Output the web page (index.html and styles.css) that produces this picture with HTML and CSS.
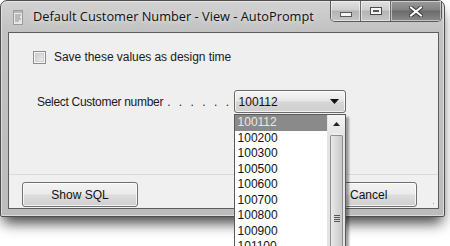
FILE: index.html
```html
<!DOCTYPE html>
<html>
<head>
<meta charset="utf-8">
<link rel="stylesheet" href="styles.css">
</head>
<body>
<div class="window">
  <div class="titlebar">
    <svg class="app-icon" width="10" height="15" viewBox="0 0 10 15">
      <rect x="0.5" y="0.5" width="9" height="14" fill="#e8e8e8" stroke="#9a9a9a"/>
      <rect x="1" y="1" width="8" height="2" fill="#b8b8b8"/>
      <path d="M2 5h6M2 7h5M2 9h6M2 11h4" stroke="#8c8c8c" stroke-width="1"/>
    </svg>
    <span class="title">Default Customer Number - View - AutoPrompt</span>
    <div class="caption-buttons">
      <div class="cap-btn cap-min"><span class="min-glyph"></span></div>
      <div class="cap-btn cap-max"><span class="max-glyph"></span></div>
      <div class="cap-btn cap-close">
        <svg width="14" height="11" viewBox="0 0 14 11">
          <path d="M2 1.5L12 9.5M12 1.5L2 9.5" stroke="#3a3a3a" stroke-width="4" stroke-linecap="square"/>
          <path d="M2 1.5L12 9.5M12 1.5L2 9.5" stroke="#ffffff" stroke-width="2" stroke-linecap="square"/>
        </svg>
      </div>
    </div>
  </div>
  <div class="client">
    <div class="content">
      <div class="check-row"><span class="checkbox"></span><span class="check-label">Save these values as design time</span></div>
      <div class="select-row">
        <span class="select-label">Select Customer number</span><span class="leader">......</span>
        <div class="combo">
          <span class="combo-value">100112</span>
          <svg class="combo-arrow" width="9" height="5" viewBox="0 0 9 5"><path d="M0 0H9L4.5 5Z" fill="#111"/></svg>
          <div class="dropdown">
            <ul class="items">
              <li class="item selected">100112</li>
              <li class="item">100200</li>
              <li class="item">100300</li>
              <li class="item">100500</li>
              <li class="item">100600</li>
              <li class="item">100700</li>
              <li class="item">100800</li>
              <li class="item">100900</li>
              <li class="item">101100</li>
            </ul>
            <div class="scrollbar">
              <div class="scroll-up"><svg width="7" height="4" viewBox="0 0 7 4"><path d="M0 4H7L3.5 0Z" fill="#222"/></svg></div>
              <div class="thumb"><span class="grip"></span></div>
            </div>
          </div>
        </div>
      </div>
    </div>
    <div class="footer">
      <button class="btn btn-sql">Show SQL</button>
      <button class="btn btn-cancel">Cancel</button>
    </div>
    <div class="grip-corner"></div>
  </div>
</div>
</body>
</html>
```

FILE: styles.css
```css
html, body {
  margin: 0;
  padding: 0;
  background: #ffffff;
  overflow: hidden;
  width: 450px;
  height: 246px;
}

.window {
  position: relative;
  width: 443px;
  height: 215px;
  border: 1px solid #4e4e4e;
  border-radius: 7px 7px 2px 2px;
  background: linear-gradient(180deg, #d2d2d2 0px, #c2c2c2 30px, #bcbcbc 100%);
  box-shadow: 0 9px 14px -3px rgba(0, 0, 0, 0.75), inset 0 0 0 1px rgba(255,255,255,0.45);
  display: flex;
  flex-direction: column;
  font-family: "Liberation Sans", Arial, sans-serif;
}

.titlebar {
  height: 31px;
  display: flex;
  align-items: flex-start;
  position: relative;
}

.app-icon {
  margin: 9px 0 0 12px;
}

.title {
  margin: 6px 0 0 10px;
  font-family: "Open Sans", "Liberation Sans", sans-serif;
  font-size: 12.8px;
  color: #111;
  text-shadow: 0 0 6px rgba(255,255,255,0.9);
}

.caption-buttons {
  margin-left: auto;
  margin-right: 2px;
  display: flex;
  height: 20px;
  border: 1px solid #5a5a5a;
  border-top: none;
  border-radius: 0 0 5px 5px;
  overflow: hidden;
}

.cap-btn {
  height: 20px;
  display: flex;
  align-items: center;
  justify-content: center;
  background: linear-gradient(180deg, #e0e0e0 0%, #cfcfcf 45%, #b4b4b4 50%, #c6c6c6 100%);
  box-shadow: inset 0 0 0 1px rgba(255,255,255,0.5);
}

.cap-min {
  width: 29px;
  border-right: 1px solid #6a6a6a;
}

.cap-max {
  width: 29px;
  border-right: 1px solid #6a6a6a;
}

.cap-close {
  width: 50px;
  background: linear-gradient(180deg, #9a9a9a 0%, #828282 45%, #6a6a6a 50%, #8a8a8a 100%);
}

.min-glyph {
  width: 10px;
  height: 3px;
  margin-top: 6px;
  background: #f4f4f4;
  border: 1px solid #5a5a5a;
}

.max-glyph {
  width: 10px;
  height: 6px;
  background: #e6e6e6;
  border: 1px solid #4a4a4a;
  box-shadow: inset 0 0 0 2px #f4f4f4, inset 0 0 0 3px #555;
}

.client {
  position: relative;
  margin: 0 5px 0 7px;
  height: 175px;
  border: 1px solid #5d5d5d;
  background: #efefef;
  display: flex;
  flex-direction: column;
  font-size: 12px;
  color: #1a1a1a;
}

.content {
  height: 142px;
  border-bottom: 1px solid #dadada;
  padding-top: 17px;
  box-sizing: border-box;
}

.check-row {
  display: flex;
  align-items: center;
  margin-left: 24px;
  height: 14px;
}

.checkbox {
  width: 11px;
  height: 11px;
  border: 1px solid #8c8c8c;
  background: linear-gradient(135deg, #c4c4c4, #f4f4f4);
  box-shadow: inset 0 0 0 1px #f6f6f6, inset 0 0 0 2px #cfcfcf;
  margin-right: 8px;
}

.check-label {
  font-size: 12px;
  letter-spacing: -0.05px;
}

.select-row {
  display: flex;
  align-items: center;
  margin-top: 26px;
  margin-left: 28px;
  height: 23px;
}

.select-label {
  font-size: 12px;
  letter-spacing: -0.3px;
}

.leader {
  letter-spacing: 8.4px;
  margin-left: 4px;
}

.combo {
  position: relative;
  margin-left: -4px;
  width: 110px;
  height: 21px;
  border: 1px solid #6a6a6a;
  border-radius: 3px;
  background: linear-gradient(180deg, #f6f6f6 0%, #e6e6e6 48%, #d6d6d6 52%, #cfcfcf 100%);
  box-shadow: inset 0 0 0 1px rgba(255,255,255,0.7);
  display: flex;
  align-items: center;
}

.combo-value {
  margin-left: 4px;
  font-size: 12px;
  color: #111;
}

.combo-arrow {
  margin-left: auto;
  margin-right: 6px;
}

.dropdown {
  position: absolute;
  left: -1px;
  top: 23px;
  width: 110px;
  height: 140px;
  border: 1px solid #5a5a5a;
  background: #ffffff;
  display: flex;
  box-shadow: 3px 3px 2px rgba(0, 0, 0, 0.35);
  z-index: 5;
}

.items {
  list-style: none;
  margin: 0;
  padding: 0;
  flex: 1;
}

.item {
  height: 15.5px;
  line-height: 15.5px;
  padding-left: 3px;
  font-size: 12px;
  color: #111;
}

.item.selected {
  background: #8a8a8a;
  color: #e8e8e8;
}

.scrollbar {
  width: 17px;
  background: linear-gradient(90deg, #e2e2e2, #f2f2f2 50%, #e2e2e2);
  border-left: 1px solid #e4e4e4;
  display: flex;
  flex-direction: column;
  align-items: center;
}

.scroll-up {
  width: 17px;
  height: 18px;
  display: flex;
  align-items: center;
  justify-content: center;
  background: linear-gradient(180deg, #f4f4f4, #e6e6e6);
}

.thumb {
  margin-top: 2px;
  width: 13px;
  flex: 1;
  border: 1px solid #8e8e8e;
  border-bottom: none;
  border-radius: 2px 2px 0 0;
  background: linear-gradient(90deg, #eaeaea, #d8d8d8 50%, #c8c8c8);
  box-sizing: border-box;
  position: relative;
}

.grip {
  position: absolute;
  left: 3px;
  top: 79px;
  width: 6px;
  height: 7px;
  background: repeating-linear-gradient(180deg, #555 0 1px, transparent 1px 2px);
}

.footer {
  flex: 1;
  display: flex;
  justify-content: space-between;
  align-items: flex-start;
  padding: 7px 21px 0 13px;
  background: #f0f0f0;
}

.btn {
  height: 25px;
  border: 1px solid #707070;
  border-radius: 3px;
  background: linear-gradient(180deg, #f3f3f3 0%, #ebebeb 48%, #dddddd 52%, #cfcfcf 100%);
  box-shadow: inset 0 0 0 1px rgba(255,255,255,0.75);
  font-family: "Liberation Sans", Arial, sans-serif;
  font-size: 12px;
  color: #111;
  padding: 0;
}

.btn-sql {
  width: 116px;
}

.btn-cancel {
  width: 75px;
  text-align: left;
  padding-left: 7px;
}

.grip-corner {
  position: absolute;
  right: 2px;
  bottom: 2px;
  width: 7px;
  height: 7px;
  background:
    radial-gradient(circle, #9a9a9a 0.8px, transparent 1px) 0 0 / 3px 3px;
  clip-path: polygon(100% 0, 100% 100%, 0 100%);
}
```
